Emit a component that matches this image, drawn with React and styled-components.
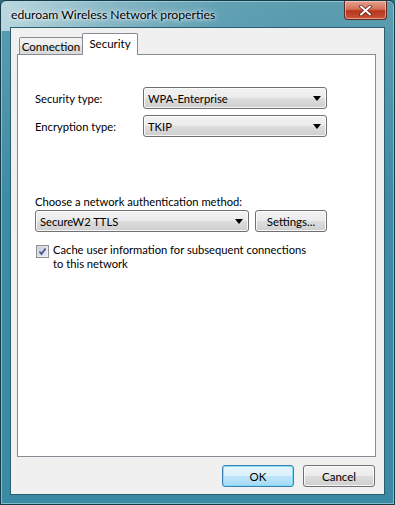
import React from "react";
import styled, { createGlobalStyle } from "styled-components";

const Global = createGlobalStyle`
  html, body { margin: 0; padding: 0; background: #2c6e80; }
  #root { width: 395px; height: 505px; }
  * { box-sizing: border-box; }
`;

const font = `Lato, "Open Sans", "Liberation Sans", sans-serif`;

const Window = styled.div`
  width: 395px;
  height: 505px;
  display: flex;
  flex-direction: column;
  padding: 0 9px 9px 9px;
  border: 1px solid #173b46;
  border-radius: 6px 6px 0 0;
  background:
    linear-gradient(100deg, rgba(220,236,240,0.75) 0%, rgba(170,205,214,0.5) 30%, rgba(120,180,198,0.2) 55%, rgba(60,140,168,0) 75%) top / 100% 30px no-repeat,
    linear-gradient(180deg, #5d9db0 0%, #3d8ba6 40%, #3a8aa6 100%);
  box-shadow: inset 0 0 0 1px rgba(180,220,230,0.6);
  font-family: ${font};
`;

const TitleBar = styled.div`
  height: 28px;
  display: flex;
  align-items: flex-start;
  justify-content: space-between;
  padding-left: 1px;
`;

const TitleText = styled.div`
  padding-top: 6px;
  font-size: 12.2px;
  color: #000;
  white-space: nowrap;
  text-shadow: 0 0 6px #fff, 0 0 3px #fff;
`;

const CloseButton = styled.div`
  width: 43px;
  height: 19px;
  margin-right: -2px;
  border: 1px solid #5b2a22;
  border-top: none;
  border-radius: 0 0 4px 4px;
  background: linear-gradient(180deg, #e4a38f 0%, #d4705a 45%, #b8361c 55%, #c9553a 100%);
  box-shadow: inset 0 0 0 1px rgba(255,220,200,0.55);
  display: flex;
  align-items: center;
  justify-content: center;
`;

const Client = styled.div`
  flex: 1;
  display: flex;
  flex-direction: column;
  background: #f0f0f0;
  border: 1px solid #2a5f6f;
  padding: 6px 8px 7px 6px;
`;

const TabStrip = styled.div`
  height: 21px;
  display: flex;
  align-items: flex-end;
  padding-left: 2px;
  position: relative;
  z-index: 2;
  margin-bottom: -1px;
`;

const Tab = styled.div`
  font-size: 11.5px;
  color: #000;
  white-space: nowrap;
  border: 1px solid #898c95;
  border-bottom: ${(p) => (p.$active ? "none" : "1px solid #898c95")};
  border-radius: 2px 2px 0 0;
  display: flex;
  align-items: center;
  justify-content: center;
  height: ${(p) => (p.$active ? "22px" : "18px")};
  padding-bottom: ${(p) => (p.$active ? "3px" : "0")};
  margin-left: ${(p) => (p.$active ? "-1px" : "0")};
  width: ${(p) => p.$w}px;
  background: ${(p) =>
    p.$active ? "#ffffff" : "linear-gradient(180deg, #f4f4f4 0%, #ececec 50%, #e2e2e2 51%, #d9d9d9 100%)"};
`;

const Panel = styled.div`
  height: 403px;
  background: #fff;
  border: 1px solid #898c95;
  padding: 32px 47px 0 17px;
  display: flex;
  flex-direction: column;
`;

const FieldRow = styled.div`
  display: flex;
  align-items: center;
  margin-bottom: ${(p) => p.$mb || 0}px;
`;

const Label = styled.div`
  width: 108px;
  font-size: 11.2px;
  color: #000;
`;

const Select = styled.div`
  width: ${(p) => p.$w}px;
  height: 22px;
  border: 1px solid #707070;
  border-radius: 3px;
  background: linear-gradient(180deg, #f2f2f2 0%, #ebebeb 50%, #dddddd 51%, #cfcfcf 100%);
  box-shadow: inset 0 0 0 1px rgba(255,255,255,0.8);
  display: flex;
  align-items: center;
  justify-content: space-between;
  padding: 0 5px 0 4px;
  font-size: 11.2px;
  color: #000;
  white-space: nowrap;
`;

const Arrow = styled.div`
  width: 0;
  height: 0;
  border-left: 4px solid transparent;
  border-right: 4px solid transparent;
  border-top: 5px solid #000;
  margin-top: 1px;
`;

const SectionLabel = styled.div`
  font-size: 11.2px;
  color: #000;
  margin-top: 58px;
  margin-bottom: 2px;
`;

const Button = styled.div`
  width: ${(p) => p.$w}px;
  height: 22px;
  border: 1px solid ${(p) => (p.$default ? "#3c7fb1" : "#707070")};
  border-radius: 3px;
  background: ${(p) =>
    p.$default
      ? "linear-gradient(180deg, #eaf6fd 0%, #d9f0fc 50%, #bee6fd 51%, #a7d9f5 100%)"
      : "linear-gradient(180deg, #f2f2f2 0%, #ebebeb 50%, #dddddd 51%, #cfcfcf 100%)"};
  box-shadow: inset 0 0 0 1px ${(p) => (p.$default ? "rgba(120,220,250,0.9)" : "rgba(255,255,255,0.8)")};
  display: flex;
  align-items: center;
  justify-content: center;
  font-size: 11.5px;
  color: #000;
  white-space: nowrap;
  margin-left: ${(p) => p.$ml || 0}px;
`;

const CheckRow = styled.div`
  display: flex;
  align-items: flex-start;
  margin-top: 11px;
  padding-left: 1px;
`;

const CheckBox = styled.div`
  width: 13px;
  height: 13px;
  flex: none;
  border: 1px solid #8f8f8f;
  background: linear-gradient(135deg, #dcdcdc 0%, #f6f6f6 100%);
  padding: 1px;
  margin-top: 2px;
`;

const CheckInner = styled.div`
  width: 100%;
  height: 100%;
  background: linear-gradient(135deg, #c8cde0 0%, #e8ebf4 100%);
  display: flex;
  align-items: center;
  justify-content: center;
`;

const CheckText = styled.div`
  font-size: 11.2px;
  line-height: 14px;
  color: #000;
  margin-left: 4px;
  white-space: nowrap;
`;

const ButtonRow = styled.div`
  display: flex;
  justify-content: flex-end;
  padding-top: 8px;
  padding-right: 1px;
`;

export default function App() {
  return (
    <>
      <Global />
      <Window>
        <TitleBar>
          <TitleText>eduroam Wireless Network properties</TitleText>
          <CloseButton>
            <svg width="13" height="11" viewBox="0 0 13 11">
              <path d="M2 1.5 L11 9.5 M11 1.5 L2 9.5" stroke="#5a1e12" strokeWidth="3.4" strokeLinecap="round" />
              <path d="M2 1.5 L11 9.5 M11 1.5 L2 9.5" stroke="#ffffff" strokeWidth="2" strokeLinecap="round" />
            </svg>
          </CloseButton>
        </TitleBar>
        <Client>
          <TabStrip>
            <Tab $w={64}>Connection</Tab>
            <Tab $active $w={56}>Security</Tab>
          </TabStrip>
          <Panel>
            <FieldRow $mb={6}>
              <Label>Security type:</Label>
              <Select $w={184}>
                WPA-Enterprise
                <Arrow />
              </Select>
            </FieldRow>
            <FieldRow>
              <Label>Encryption type:</Label>
              <Select $w={184}>
                TKIP
                <Arrow />
              </Select>
            </FieldRow>
            <SectionLabel>Choose a network authentication method:</SectionLabel>
            <FieldRow>
              <Select $w={214}>
                SecureW2 TTLS
                <Arrow />
              </Select>
              <Button $w={72} $ml={6}>Settings...</Button>
            </FieldRow>
            <CheckRow>
              <CheckBox>
                <CheckInner>
                  <svg width="9" height="9" viewBox="0 0 9 9">
                    <path d="M1.5 4.5 L3.5 7 L7.5 1.5" stroke="#4a5a8a" strokeWidth="1.8" fill="none" />
                  </svg>
                </CheckInner>
              </CheckBox>
              <CheckText>
                Cache user information for subsequent connections
                <br />
                to this network
              </CheckText>
            </CheckRow>
          </Panel>
          <ButtonRow>
            <Button $default $w={72}>OK</Button>
            <Button $w={72} $ml={9}>Cancel</Button>
          </ButtonRow>
        </Client>
      </Window>
    </>
  );
}
